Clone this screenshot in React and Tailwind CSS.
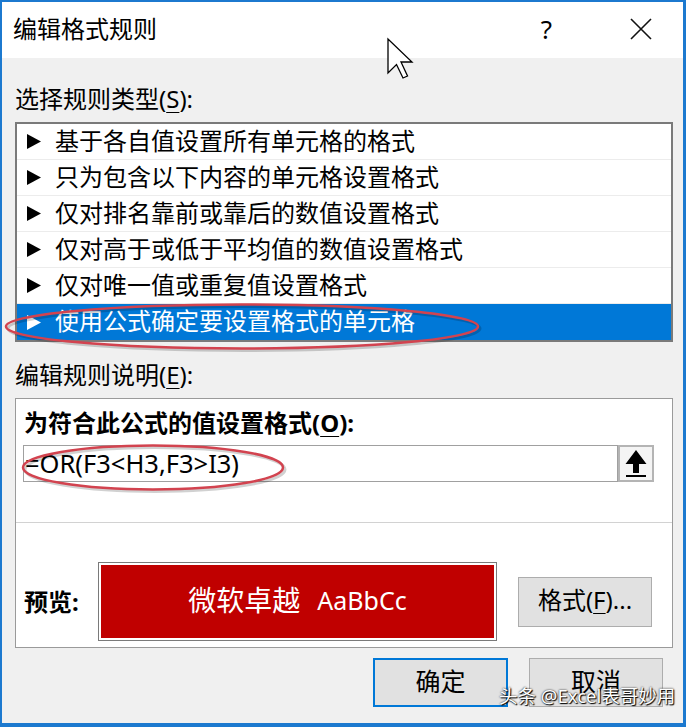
import React from 'react';

const rules = [
  '基于各自值设置所有单元格的格式',
  '只为包含以下内容的单元格设置格式',
  '仅对排名靠前或靠后的数值设置格式',
  '仅对高于或低于平均值的数值设置格式',
  '仅对唯一值或重复值设置格式',
  '使用公式确定要设置格式的单元格',
];

const font = { fontFamily: '"Noto Sans", "Noto Sans CJK SC", sans-serif' };

const Triangle = ({ color }) => (
  <svg width="14" height="15" viewBox="0 0 14 15" className="shrink-0">
    <polygon points="0,0 14,7.5 0,15" fill={color} />
  </svg>
);

const Overlay = () => (
  <svg
    width="688"
    height="727"
    viewBox="0 0 688 727"
    className="absolute left-0 top-0 pointer-events-none"
  >
    {/* red marks */}
    <ellipse cx="242" cy="326.5" rx="236" ry="22" fill="none" stroke="#000" strokeOpacity="0.18" strokeWidth="3" />
    <ellipse cx="240" cy="324.5" rx="236" ry="22" fill="none" stroke="#d2434f" strokeWidth="2.5" />
    <ellipse cx="153" cy="467.5" rx="130" ry="22" fill="none" stroke="#000" strokeOpacity="0.18" strokeWidth="3" />
    <ellipse cx="151" cy="465.5" rx="130" ry="22" fill="none" stroke="#d2434f" strokeWidth="2.5" />
    {/* mouse pointer */}
    <polygon
      points="386,37 386,71 394.5,62.5 401,76 405.5,74 399,60 410,60"
      fill="#fff"
      stroke="#000"
      strokeWidth="1.3"
      strokeLinejoin="miter"
    />
  </svg>
);

export default function App() {
  return (
    <div
      className="relative w-[686px] h-[727px] flex flex-col border-t-2 border-l-2 border-r-[3px] border-b-4 border-[#1c79cf] text-black"
      style={font}
    >
      {/* Title bar */}
      <div className="h-[56px] bg-white flex items-center pl-[11px] pb-[3px]">
        <span className="text-[24px] leading-none">编辑格式规则</span>
        <span className="ml-auto mr-[78px] text-[26px] leading-none">?</span>
        <svg width="22" height="22" viewBox="0 0 22 22" className="mr-[31px]">
          <path d="M1 1 L21 21 M21 1 L1 21" stroke="#111" strokeWidth="1.6" />
        </svg>
      </div>

      {/* Body */}
      <div className="flex-1 bg-[#f0f0f0] flex flex-col pl-[13px] pr-[10px]">
        <div className="mt-[26px] h-[30px] flex items-center text-[24px] leading-none">
          选择规则类型(<span className="underline underline-offset-4 decoration-1">S</span>):
        </div>

        {/* rule type list */}
        <div className="mt-[8px] w-[658px] border-2 border-[#7a7a7a] bg-white flex flex-col">
          {rules.map((r, i) => {
            const sel = i === rules.length - 1;
            return (
              <div
                key={r}
                className={`h-[36px] flex items-center gap-[14px] pl-[10px] text-[24px] leading-none ${
                  sel ? 'bg-[#0078d7] text-white' : 'border-b border-[#ececec]'
                }`}
              >
                <Triangle color={sel ? '#fff' : '#000'} />
                <span className="pb-[2px]">{r}</span>
              </div>
            );
          })}
        </div>

        <div className="mt-[18px] h-[30px] flex items-center text-[24px] leading-none">
          编辑规则说明(<span className="underline underline-offset-4 decoration-1">E</span>):
        </div>

        {/* rule description */}
        <div className="mt-[8px] w-[658px] h-[250px] border border-[#9a9a9a] bg-white flex flex-col">
          <div className="mt-[9px] h-[30px] pl-[8px] flex items-center text-[24px] font-bold leading-none">
            为符合此公式的值设置格式(<span className="underline underline-offset-4 decoration-1">O</span>):
          </div>
          <div className="mt-[7px] ml-[7px] flex h-[37px]">
            <div className="w-[595px] border border-[#a0a0a0] flex items-center pl-[1px] text-[25.5px] leading-none">
              =OR(F3&lt;H3,F3&gt;I3)
            </div>
            <div className="w-[36px] border-2 border-[#b4b4b4] bg-[#f4f4f4] flex items-center justify-center">
              <svg width="22" height="27" viewBox="0 0 22 27">
                <polygon points="11,0 21.5,14 14,14 14,23 8,23 8,14 0.5,14" fill="#000" />
                <rect x="1" y="25" width="20" height="2" fill="#000" />
              </svg>
            </div>
          </div>
          <div className="mt-[40px] h-px bg-[#d2d2d2]" />
          <div className="mt-[39px] flex items-center pl-[8px]">
            <span className="w-[74px] text-[24px] font-bold leading-none">预览:</span>
            <div className="w-[399px] h-[79px] border border-[#7a7a7a] p-[2px] bg-white">
              <div className="h-full bg-[#c00000] flex items-center justify-center gap-[17px] text-white leading-none pb-[3px]">
                <span className="text-[28px]">微软卓越</span>
                <span className="text-[25px]">AaBbCc</span>
              </div>
            </div>
            <button className="ml-[21px] w-[134px] h-[50px] border border-[#adadad] bg-[#e1e1e1] text-[24px] leading-none flex items-center justify-center pb-[3px]">
              格式(<span className="underline underline-offset-4 decoration-1">F</span>)...
            </button>
          </div>
        </div>

        {/* footer buttons */}
        <div className="mt-[10px] flex justify-end gap-[21px] pr-[10px]">
          <button className="w-[135px] h-[49px] border-2 border-[#0078d7] bg-[#e1e1e1] text-[25px] leading-none flex items-center justify-center pb-[2px]">
            确定
          </button>
          <button className="w-[134px] h-[49px] border border-[#adadad] bg-[#e1e1e1] text-[25px] leading-none flex items-center justify-center pb-[2px]">
            取消
          </button>
        </div>
      </div>

      <Overlay />

      {/* watermark */}
      <div className="absolute left-[497px] top-[685px] text-[18.5px] leading-none text-white [text-shadow:0_0_2px_#000,1px_1px_1px_#000]">
        头条 @Excel表哥妙用
      </div>
    </div>
  );
}
